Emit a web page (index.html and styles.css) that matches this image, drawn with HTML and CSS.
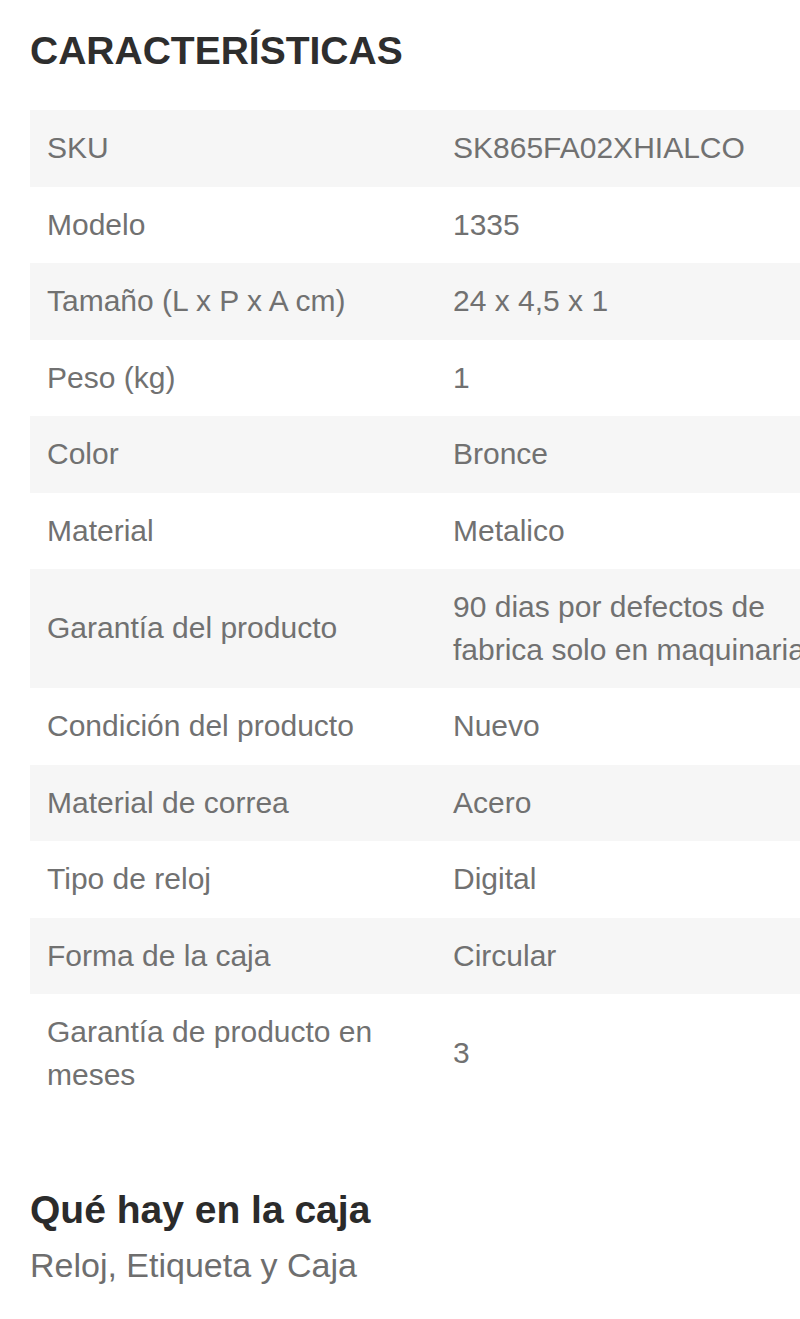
FILE: index.html
```html
<!DOCTYPE html>
<html lang="es">
<head>
<meta charset="utf-8">
<title>Características</title>
<link rel="stylesheet" href="styles.css">
</head>
<body>
<div class="page">
  <h2 class="section-title">CARACTERÍSTICAS</h2>
  <table class="specs">
    <colgroup><col class="col-label"><col class="col-value"></colgroup>
    <tbody>
      <tr><td>SKU</td><td>SK865FA02XHIALCO</td></tr>
      <tr><td>Modelo</td><td>1335</td></tr>
      <tr><td>Tamaño (L x P x A cm)</td><td>24 x 4,5 x 1</td></tr>
      <tr><td>Peso (kg)</td><td>1</td></tr>
      <tr><td>Color</td><td>Bronce</td></tr>
      <tr><td>Material</td><td>Metalico</td></tr>
      <tr><td>Garantía del producto</td><td>90 dias por defectos de fabrica solo en maquinaria</td></tr>
      <tr><td>Condición del producto</td><td>Nuevo</td></tr>
      <tr><td>Material de correa</td><td>Acero</td></tr>
      <tr><td>Tipo de reloj</td><td>Digital</td></tr>
      <tr><td>Forma de la caja</td><td>Circular</td></tr>
      <tr><td>Garantía de producto en meses</td><td>3</td></tr>
    </tbody>
  </table>
  <h3 class="box-title">Qué hay en la caja</h3>
  <p class="box-text">Reloj, Etiqueta y Caja</p>
</div>
</body>
</html>
```
FILE: styles.css
```css
html, body {
  margin: 0;
  padding: 0;
  background: #ffffff;
  overflow-x: hidden;
}
body {
  font-family: "Liberation Sans", Arial, sans-serif;
  color: #707070;
}
.page {
  padding: 28px 0 0 30px;
  width: 850px;
}
.section-title {
  margin: 0 0 36px 0;
  font-size: 39px;
  line-height: 46px;
  font-weight: bold;
  color: #2e2e2e;
}
.specs {
  border-collapse: collapse;
  width: 820px;
  table-layout: fixed;
}
.col-label { width: 406px; }
.col-value { width: 414px; }
.specs td {
  padding: 17px;
  font-size: 30px;
  line-height: 42.5px;
  color: #717171;
  vertical-align: middle;
}
.specs tr:nth-child(odd) td {
  background: #f6f6f6;
}
.box-title {
  margin: 75px 0 13px 0;
  font-size: 39px;
  line-height: 44px;
  font-weight: bold;
  color: #2b2b2b;
}
.box-text {
  margin: 0;
  font-size: 34px;
  line-height: 40px;
  color: #6e6e6e;
}
```
